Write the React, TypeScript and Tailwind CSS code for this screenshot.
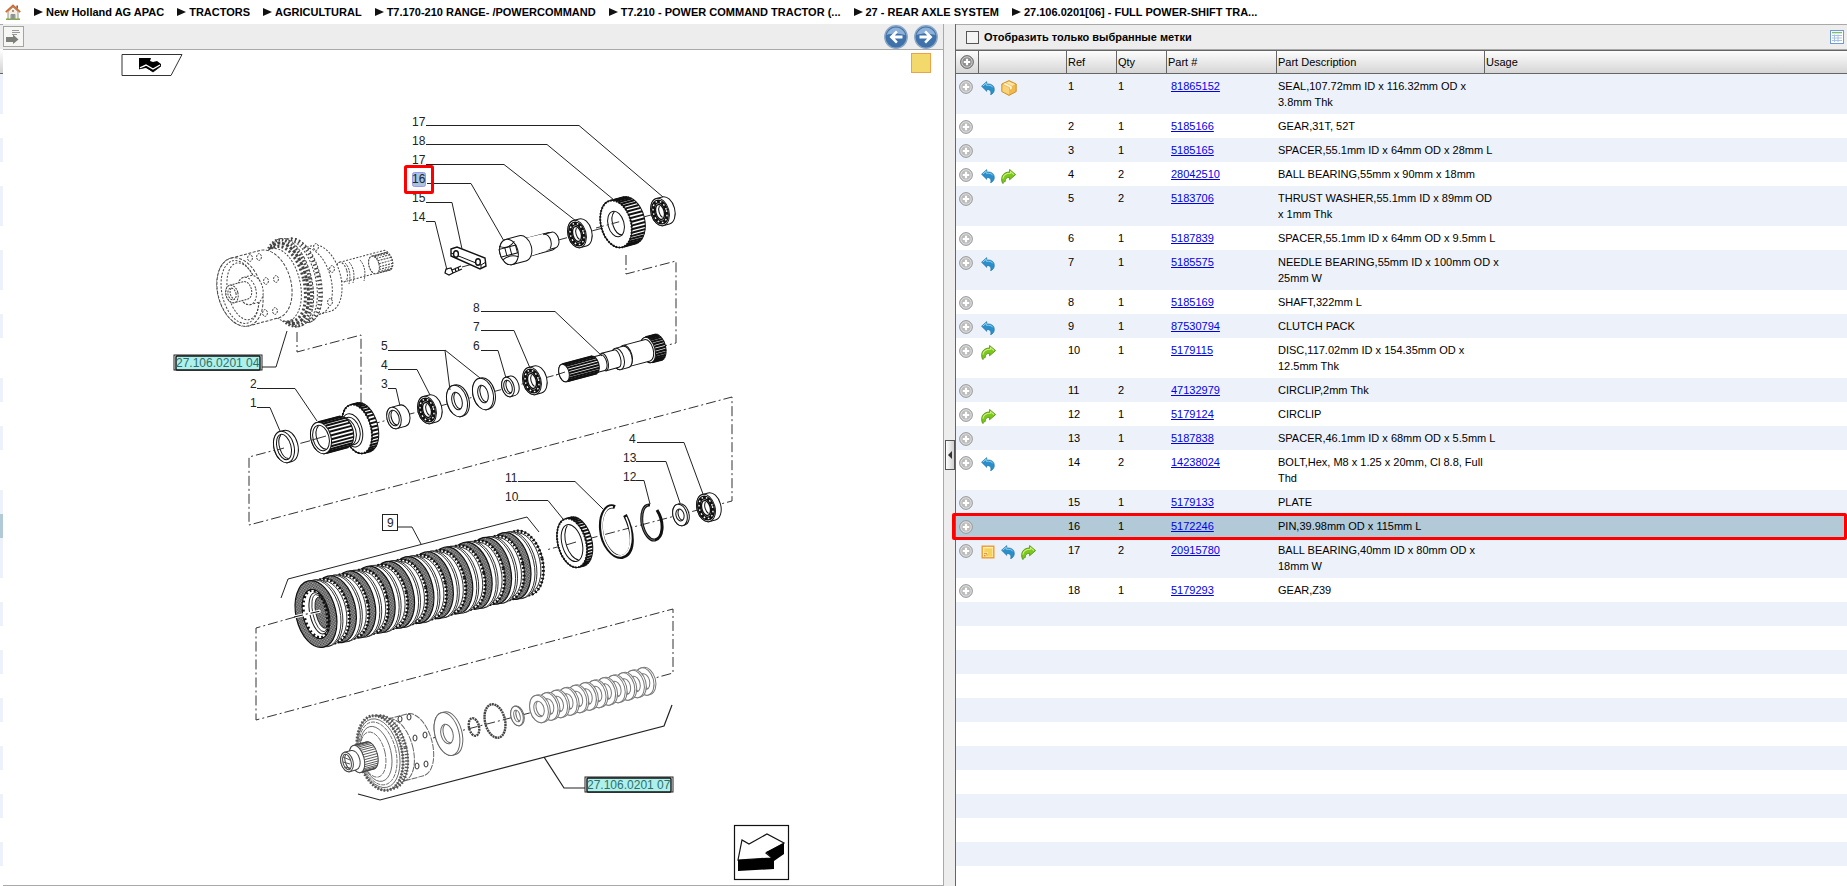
import { Fragment, useState } from 'react';
import type { ReactNode } from 'react';

type IconName = 'note' | 'blue' | 'green' | 'box';

interface Part {
  ref: number;
  qty: number;
  num: string;
  desc: string[];
  icons?: IconName[];
}

const CRUMBS = [
  'New Holland AG APAC',
  'TRACTORS',
  'AGRICULTURAL',
  'T7.170-210 RANGE- /POWERCOMMAND',
  'T7.210 - POWER COMMAND TRACTOR (...',
  '27 - REAR AXLE SYSTEM',
  '27.106.0201[06] - FULL POWER-SHIFT TRA...',
];

const PARTS: Part[] = [
  { ref: 1, qty: 1, num: '81865152', desc: ['SEAL,107.72mm ID x 116.32mm OD x', '3.8mm Thk'], icons: ['blue', 'box'] },
  { ref: 2, qty: 1, num: '5185166', desc: ['GEAR,31T, 52T'] },
  { ref: 3, qty: 1, num: '5185165', desc: ['SPACER,55.1mm ID x 64mm OD x 28mm L'] },
  { ref: 4, qty: 2, num: '28042510', desc: ['BALL BEARING,55mm x 90mm x 18mm'], icons: ['blue', 'green'] },
  { ref: 5, qty: 2, num: '5183706', desc: ['THRUST WASHER,55.1mm ID x 89mm OD', 'x 1mm Thk'] },
  { ref: 6, qty: 1, num: '5187839', desc: ['SPACER,55.1mm ID x 64mm OD x 9.5mm L'] },
  { ref: 7, qty: 1, num: '5185575', desc: ['NEEDLE BEARING,55mm ID x 100mm OD x', '25mm W'], icons: ['blue'] },
  { ref: 8, qty: 1, num: '5185169', desc: ['SHAFT,322mm L'] },
  { ref: 9, qty: 1, num: '87530794', desc: ['CLUTCH PACK'], icons: ['blue'] },
  { ref: 10, qty: 1, num: '5179115', desc: ['DISC,117.02mm ID x 154.35mm OD x', '12.5mm Thk'], icons: ['green'] },
  { ref: 11, qty: 2, num: '47132979', desc: ['CIRCLIP,2mm Thk'] },
  { ref: 12, qty: 1, num: '5179124', desc: ['CIRCLIP'], icons: ['green'] },
  { ref: 13, qty: 1, num: '5187838', desc: ['SPACER,46.1mm ID x 68mm OD x 5.5mm L'] },
  { ref: 14, qty: 2, num: '14238024', desc: ['BOLT,Hex, M8 x 1.25 x 20mm, Cl 8.8, Full', 'Thd'], icons: ['blue'] },
  { ref: 15, qty: 1, num: '5179133', desc: ['PLATE'] },
  { ref: 16, qty: 1, num: '5172246', desc: ['PIN,39.98mm OD x 115mm L'] },
  { ref: 17, qty: 2, num: '20915780', desc: ['BALL BEARING,40mm ID x 80mm OD x', '18mm W'], icons: ['note', 'blue', 'green'] },
  { ref: 18, qty: 1, num: '5179293', desc: ['GEAR,Z39'] },
];

const BLANK_ROWS = Array.from({ length: 12 }, (_, i) => i + PARTS.length);

function rowColor(index: number, selected: boolean) {
  if (selected) return 'bg-[#b2c9d8]';
  return index % 2 === 0 ? 'bg-[#edf2fa]' : 'bg-white';
}

/* ---------- icons ---------- */

function PlusIcon({ dark = false }: { dark?: boolean }) {
  return (
    <svg className="block size-[14px]" viewBox="0 0 14 14">
      <circle cx="7" cy="7" r="6.4" fill={dark ? '#8e8e8e' : '#bcbcbc'} stroke={dark ? '#6e6e6e' : '#9c9c9c'} />
      <circle cx="7" cy="7" r="5.2" fill="none" stroke={dark ? '#ddd' : '#e6e6e6'} strokeWidth="0.8" />
      <path d="M7 3.8V10.2M3.8 7H10.2" stroke="#fff" strokeWidth="2.2" />
    </svg>
  );
}

function PartIcon({ name }: { name: IconName }) {
  if (name === 'blue') {
    return (
      <svg className="h-[14px] w-[14px]" viewBox="0 0 14 14">
        <path d="M0.5 5.2L5.8 0.6V3C11 2.6 13.6 5 13.3 9C13.1 11 12 12.8 9.6 13.8C10.4 10.8 9.8 8.6 5.8 8.4V10.4Z" fill="#2b8fc9" stroke="#1c6fa6" strokeWidth="0.6" />
        <path d="M1.8 5.1L5.2 2.2V4.2C8.5 4 10.8 4.6 11.8 6.4" fill="none" stroke="#8fd0f2" strokeWidth="1" />
      </svg>
    );
  }
  if (name === 'green') {
    return (
      <svg className="h-[15px] w-[15px]" viewBox="0 0 15 15">
        <path d="M14.6 5.6L8.6 0.5V3C3 3.1 0.4 6.4 0.7 11C0.8 12.6 1.2 13.8 2 14.6C2 13.6 2.6 12.8 4.2 12.6C4.2 9.8 5.2 8.4 8.6 8.3V10.8Z" fill="#7cc91d" stroke="#4b8a0c" strokeWidth="0.8" />
        <path d="M13 5.6L9.5 2.6V4.3C5 4.3 2.4 6 1.8 9.6" fill="none" stroke="#cdf07a" strokeWidth="1.1" />
      </svg>
    );
  }
  if (name === 'box') {
    return (
      <svg className="h-4 w-4" viewBox="0 0 16 16">
        <path d="M8 0.6L15.2 4V11.6L8 15.4L0.8 11.6V4Z" fill="#f3b94a" stroke="#c98a1b" strokeWidth="0.9" />
        <path d="M8 1.4L14.2 4.3L8 7.6L1.8 4.3Z" fill="#fde6a4" />
        <path d="M8 7.8V14.6L1.6 11.2V4.8Z" fill="#f9d27c" />
        <path d="M4.6 3L11.2 6.2V9L8.6 10.2V7.4L2 4.4" fill="#fff6d8" stroke="#dfa23a" strokeWidth="0.5" />
      </svg>
    );
  }
  return (
    <svg className="h-[14px] w-[14px]" viewBox="0 0 14 14">
      <rect x="1.2" y="1.2" width="11.6" height="11.6" fill="#fff1c0" stroke="#f09a2c" strokeWidth="1.4" />
      <path d="M3.2 3.2H11.4V11.4H7V7.2H3.2Z" fill="#f4d25c" />
      <path d="M3 8.4H6V11.4" fill="none" stroke="#d9952a" strokeWidth="1" />
      <path d="M3 9.8H4.6V11.4H3Z" fill="#d9952a" />
    </svg>
  );
}

function HomeIcon() {
  return (
    <svg className="size-4" viewBox="0 0 16 16">
      <path d="M1 15.2H15" stroke="#7cb82f" strokeWidth="1.6" />
      <path d="M3 7.5V15H6V10.5H10V15H13V7.5L8 3Z" fill="#f4efe2" stroke="#8a8a86" strokeWidth="0.9" />
      <path d="M6.2 15V10.2H9.8V15Z" fill="#8d9196" />
      <path d="M11.3 1.5H13V5L11.3 3.6Z" fill="#9b5b3a" />
      <path d="M0.8 8.2L8 1.4L15.2 8.2" fill="none" stroke="#d0682a" strokeWidth="1.8" />
      <circle cx="8" cy="7" r="1" fill="#9a6f52" />
    </svg>
  );
}

function NavCircle({ flip = false }: { flip?: boolean }) {
  return (
    <svg className="block size-6" viewBox="0 0 24 24">
      <circle cx="12" cy="12" r="11.2" fill="#3f72ab" stroke="#8ba6c4" strokeWidth="1.4" />
      <path d="M2.5 10A9.8 9.8 0 0 1 21.5 10C15 8 8 8 2.5 10Z" fill="#8db1d8" />
      <path
        d={flip ? 'M12 5.5L18.5 12L12 18.5L10.2 16.7L13.2 13.6H5.5V10.4H13.2L10.2 7.3Z' : 'M12 5.5L5.5 12L12 18.5L13.8 16.7L10.8 13.6H18.5V10.4H10.8L13.8 7.3Z'}
        fill="#fff"
      />
    </svg>
  );
}

function ExportIcon() {
  return (
    <svg className="block size-[19px]" viewBox="0 0 19 19">
      <path d="M8 3.5H15M8 5.5H16M8 7.5H13" stroke="#9a9a9a" strokeWidth="1" />
      <path d="M2 10H9V7.5L14.5 12.5L9 17V15H2Z" fill="#7c7f7a" />
    </svg>
  );
}

function GridIcon() {
  return (
    <svg className="block size-[14px]" viewBox="0 0 14 14">
      <rect x="0.5" y="0.5" width="13" height="13" fill="#fff" stroke="#6f9ad3" />
      <path d="M2 2.6H12" stroke="#7fbf6c" strokeWidth="1.4" />
      <path d="M2 5.5H12M2 8H12M2 10.5H12M4.5 4.5V12M8 4.5V12" stroke="#a7c2e6" />
    </svg>
  );
}

/* ---------- exploded view ---------- */

const AXIS_TILT = -15;

function range(n: number) {
  return Array.from({ length: n }, (_, i) => i);
}

interface CylinderProps {
  x: number;
  y: number;
  rx: number;
  ry: number;
  w: number;
  hx?: number;
  hy?: number;
  ribs?: number;
  ribWidth?: number;
  depth?: number;
  dash?: string;
  stroke?: string;
  children?: ReactNode;
}

// A turned part seen from its left face, lying along the tilted axis
function Cylinder({ x, y, rx, ry, w, hx = 0, hy = 0, ribs = 0, ribWidth = 1, depth = 2, dash, stroke = '#111', children }: CylinderProps) {
  return (
    <g transform={`translate(${x} ${y}) rotate(${AXIS_TILT})`} fill="#fff" stroke={stroke} strokeDasharray={dash}>
      <path d={`M0 ${-ry}H${w}A${rx} ${ry} 0 0 1 ${w} ${ry}H0A${rx} ${ry} 0 0 1 0 ${-ry}Z`} />
      {range(ribs).map((i) => {
        const a = -Math.PI / 2 + (Math.PI * (i + 0.5)) / ribs;
        const px = Math.cos(a) * rx;
        const py = Math.sin(a) * ry;
        return <path key={i} d={`M${px.toFixed(1)} ${py.toFixed(1)}h${w}`} strokeWidth={ribWidth} />;
      })}
      <ellipse rx={rx} ry={ry} />
      {hx > 0 && (
        <>
          <ellipse rx={hx} ry={hy} />
          <path d={`M${-hx * 0.3} ${-hy * 0.95}A${hx} ${hy} 0 0 0 ${-hx * 0.1} ${hy * 0.95}`} transform={`translate(${depth} 0)`} fill="none" />
        </>
      )}
      {children}
    </g>
  );
}

function Bearing({ x, y }: { x: number; y: number }) {
  return (
    <Cylinder x={x} y={y} rx={9} ry={14} w={6}>
      <ellipse rx="6.6" ry="10.8" fill="none" stroke="#111" strokeWidth="4" />
      <ellipse rx="6.6" ry="10.8" fill="none" stroke="#fff" strokeWidth="1.4" strokeDasharray="1.6 2.8" />
      <ellipse rx="4.2" ry="7.6" strokeWidth="1.4" />
      <path d="M1 -6A4 7 0 0 0 1 6" fill="none" />
    </Cylinder>
  );
}

function Teeth({ rx, ry, width = 2.5, dash = '1.6 1.6' }: { rx: number; ry: number; width?: number; dash?: string }) {
  return <ellipse rx={rx} ry={ry} fill="none" strokeWidth={width} strokeDasharray={dash} />;
}

function ClutchPack() {
  return (
    <g>
      {range(11).reverse().map((i) => {
        const x = 316 + i * 19.4;
        const y = 614 - i * 4.8;
        return (
          <g key={i} stroke="#111">
            <g transform={`translate(${x + 13} ${y - 3}) rotate(-13)`}>
              <ellipse rx="20" ry="33" fill="#fff" strokeWidth="0.8" />
              <Teeth rx={19.5} ry={32.5} width={3} dash="1.8 2" />
              <ellipse cx="-1" rx="18" ry="31" fill="#fff" strokeWidth="0.8" />
            </g>
            <g transform={`translate(${x + 6} ${y - 1}) rotate(-13)`}>
              <ellipse rx="20" ry="34" fill="#fff" strokeWidth="0.8" />
              <ellipse cx="-2" rx="20" ry="34" fill="#fff" strokeWidth="0.8" />
            </g>
            <g transform={`translate(${x} ${y}) rotate(-13)`}>
              <ellipse rx="20" ry="34" fill="url(#friction)" strokeWidth="1.2" />
            </g>
          </g>
        );
      })}
      <g transform="translate(316 614) rotate(-13)" stroke="#111">
        <ellipse rx="13" ry="25" fill="#fff" />
        <Teeth rx={12} ry={24} width={3} dash="2 2.5" />
        <ellipse cx="3" rx="9" ry="21" fill="#fff" strokeWidth="1" />
        <ellipse cx="4" rx="7" ry="19" fill="#fff" strokeWidth="0.8" />
        <ellipse cx="6" rx="6" ry="16" fill="url(#friction)" strokeWidth="0.8" />
        <path d="M8 -18C12 -9 12 8 7 18" fill="none" strokeWidth="3" strokeDasharray="2 2" />
        <path d="M-21 -2H5" stroke="#fff" strokeWidth="3" />
        <path d="M-22 -2H6" strokeDasharray="9 3 2 3" />
      </g>
    </g>
  );
}

function GhostClutch() {
  return (
    <g stroke="#444">
      <Cylinder x={342} y={272} rx={5} ry={10} w={46} dash="2 1.5" stroke="#444" />
      <Cylinder x={374} y={265} rx={5} ry={9} w={14} ribs={9} dash="2 1" stroke="#444" />
      <path d="M345 263Q352 270 349 284M349 262Q356 270 353 283M360 260Q367 268 364 281" fill="none" strokeDasharray="2 1" />
      <Cylinder x={312} y={281} rx={19} ry={34} w={10} dash="2 1.5" stroke="#444" />
      <g transform="translate(288 283) rotate(-13)">
        <ellipse cx="12" rx="21" ry="43" fill="#fff" strokeWidth="1" strokeDasharray="2 2" />
        <ellipse cx="11" rx="20" ry="42" fill="none" strokeWidth="4" strokeDasharray="1.4 2.6" />
        <ellipse cx="7" rx="21" ry="42" fill="#fff" strokeDasharray="2 1.5" />
        <ellipse cx="2" rx="22" ry="45" fill="#fff" strokeDasharray="3 1.5" />
        <Teeth rx={22} ry={44} width={3} dash="1.6 1.8" />
        <ellipse cx="-1" rx="20" ry="41" fill="none" strokeWidth="3" strokeDasharray="3 1.6" />
        <ellipse cx="-3" rx="19" ry="38" fill="none" strokeWidth="3" strokeDasharray="2 2.2" />
        <ellipse cx="-8" rx="20" ry="37" fill="#fff" strokeDasharray="2 1.5" />
      </g>
      <Cylinder x={240} y={292} rx={22} ry={35} w={30} dash="3 1.5" stroke="#444" />
      <g transform="translate(240 292) rotate(-13)" fill="none" strokeDasharray="2 1.5">
        <ellipse rx="18" ry="32" />
        <ellipse cx="3" rx="15" ry="29" />
      </g>
      <Cylinder x={247} y={291} rx={9} ry={14} w={7} dash="2 1.5" stroke="#444" />
      <Cylinder x={232} y={294} rx={6} ry={9} w={14} hx={4} hy={6} dash="2 1" stroke="#444" />
      <g fill="#fff" strokeDasharray="2 1">
        {[[266, 281], [276, 279], [265, 313], [275, 311], [250, 258], [259, 257], [332, 269], [330, 302], [316, 247]].map(([cx, cy]) => (
          <ellipse key={`${cx}-${cy}`} cx={cx} cy={cy} rx="2.4" ry="3.4" />
        ))}
      </g>
    </g>
  );
}

function GhostDrum() {
  return (
    <g stroke="#555">
      <Cylinder x={396} y={750} rx={17} ry={32} w={20} dash="6 1" stroke="#666" />
      <g transform="translate(386 752) rotate(-13)">
        <ellipse rx="21" ry="37" fill="#fff" strokeWidth="0.8" />
        <Teeth rx={20} ry={36.5} width={4} dash="1.4 1.8" />
      </g>
      <g transform="translate(380 753) rotate(-13)">
        <ellipse rx="22" ry="38" fill="#fff" strokeWidth="0.8" />
        <Teeth rx={22} ry={38} width={3} dash="1.6 1.6" />
        <ellipse cx="-1" rx="20" ry="35" fill="#fff" strokeWidth="0.8" />
        <ellipse cx="-2" rx="18" ry="32" fill="none" strokeDasharray="4 1" strokeWidth="0.8" />
        <ellipse cx="-4" rx="15" ry="28" fill="none" strokeWidth="0.8" />
        <ellipse cx="-7" rx="12" ry="23" fill="none" strokeDasharray="5 1" strokeWidth="0.8" />
      </g>
      <Cylinder x={357} y={759} rx={7} ry={14} w={14} ribs={17} ribWidth={0.8} stroke="#444" />
      <Cylinder x={347} y={762} rx={6} ry={10} w={7} hx={4} hy={8} stroke="#444" />
      <path d="M343 757l7 3M343 762l7 2M344 767l6 1" />
      <g fill="#fff" stroke="#333">
        {[[400, 719], [409, 717], [415, 738], [425, 735], [417, 766], [426, 764]].map(([cx, cy]) => (
          <ellipse key={`${cx}-${cy}`} cx={cx} cy={cy} rx="2" ry="3" />
        ))}
      </g>
    </g>
  );
}

const CALLOUTS: [string, number, number, string][] = [
  ['17', 412, 126, 'M426 125.5H579L663 197'],
  ['18', 412, 145, 'M426 144.5H547L614 200'],
  ['17', 412, 164, 'M426 164.5H504L576 221'],
  ['16', 412, 183, 'M427 183.5H471L504 241'],
  ['15', 412, 202, 'M426 202.5H452L462 249'],
  ['14', 412, 221, 'M426 221.5H435L447 270'],
  ['8', 473, 312, 'M481 311.5H555L602 356'],
  ['7', 473, 331, 'M481 330.5H514L530 368'],
  ['6', 473, 350, 'M481 350.5H498L506 378'],
  ['5', 381, 350, 'M388 350.5H445L450 390M445 350L480 378'],
  ['4', 381, 369, 'M388 369.5H417L430 395'],
  ['3', 381, 388, 'M388 388.5H396L400 406'],
  ['2', 250, 388, 'M257 388.5H295L317 421'],
  ['1', 250, 407, 'M257 407.5H270L280 431'],
  ['11', 505, 482, 'M518 481.5H575L603 509'],
  ['10', 505, 501, 'M518 500.5H548L563 519'],
  ['4', 629, 443, 'M637 442.5H684L703 494'],
  ['13', 623, 462, 'M636 461.5H666L680 503'],
  ['12', 623, 481, 'M636 480.5H644L650 504'],
];

function ReferenceTag({ x, y, label }: { x: number; y: number; label: string }) {
  return (
    <g>
      <rect x={x} y={y} width="88" height="15" fill="#fff" stroke="#222" />
      <rect x={x + 2} y={y + 1} width="84" height="14" rx="1" fill="#aef0ea" stroke="#111" strokeWidth="1.4" />
      <text x={x + 2} y={y + 12} fill="#2f6f6b">{label}</text>
    </g>
  );
}

function ExplodedView() {
  return (
    <svg
      className="block h-full w-full font-['Liberation_Sans',Arial,sans-serif] text-[12px]"
      viewBox="3 50 940 835"
      preserveAspectRatio="xMinYMin meet"
      role="img"
      aria-label="27.106.0201[06]"
    >
      <defs>
        <pattern id="friction" width="3" height="3" patternUnits="userSpaceOnUse">
          <rect width="3" height="3" fill="#a8a8a8" />
          <path d="M0 0H1.4V1.4H0ZM1.5 1.5H2.9V2.9H1.5Z" fill="#3a3a3a" />
        </pattern>
      </defs>

      <path d="M122 54.5H182L171 75.5H122Z" fill="#fff" stroke="#333" />
      <path d="M139 58H151L150 61L153 62L157 61L161 64V66L153 72L146 68L139 69Z" fill="#000" />
      <path d="M140 68L146 65L153 69L160 65" fill="none" stroke="#fff" strokeWidth="1.4" />
      <path d="M139 69L146 67L153 72L161 66" fill="none" stroke="#000" strokeWidth="0.8" />

      {/* assembly axes */}
      <g fill="none" stroke="#333" strokeDasharray="10 3 2 3">
        <path d="M297 332V352L361 335V403" />
        <path d="M626 255V274L676 261V343L664 346" />
        <path d="M283 448L249 457V525L732 397V501L546 550" />
        <path d="M295 617L256 628V720L673 609V673L655 678" />
        <path d="M283 448L567 372" />
        <path d="M540 245L662 212" />
        <path d="M433 738L545 709" />
        <path d="M462 267L480 262" />
      </g>

      <GhostClutch />
      <GhostDrum />

      {/* row 14 - 18 */}
      <path d="M451 249L457 247L485 258L486 266L480 269L451 256Z" fill="#fff" stroke="#111" strokeWidth="1.4" />
      <path d="M451 253L481 265L486 262M481 265V268" fill="none" stroke="#111" />
      <ellipse cx="456" cy="254" rx="2.4" ry="3.2" fill="#fff" stroke="#111" strokeWidth="1.4" />
      <ellipse cx="478" cy="262" rx="2.4" ry="3.2" fill="#fff" stroke="#111" strokeWidth="1.4" />
      <path d="M446 269L451 268L453 273L449 275L445 273ZM452 270L461 266M453 273L462 269M455 268l1 4M458 267l1 4" fill="#fff" stroke="#111" strokeWidth="1.2" />
      <Cylinder x={529} y={247} rx={6} ry={9} w={22} />
      <Cylinder x={546} y={242} rx={5} ry={8} w={8} />
      <path d="M526 238L543 234L550 249L531 256Z" fill="#fff" />
      <Cylinder x={509} y={252} rx={9} ry={13} w={14}>
        <path d="M-9 -5L8 -5V3L-9 3Z" />
        <path d="M-3 -5V3M2 -5V3M-8 -8Q0 -2 8 -9M-8 6Q0 2 8 7" fill="none" />
      </Cylinder>
      <Bearing x={577} y={234} />
      <Cylinder x={616} y={224} rx={15} ry={24} w={14} ribs={20} ribWidth={2} hx={8} hy={13} depth={4}>
        <Teeth rx={15} ry={24} width={2} dash="1.5 1.5" />
      </Cylinder>
      <path d="M596 228L622 221" stroke="#333" strokeDasharray="8 3 2 3" />
      <Bearing x={660} y={212} />

      {/* row 1 - 8 */}
      <Cylinder x={284} y={447} rx={10} ry={16} w={4} hx={7} hy={13} depth={2} />
      <path d="M277 450L284 448" stroke="#333" />
      <Cylinder x={357} y={429} rx={14} ry={25} w={7} ribs={20} ribWidth={2}>
        <Teeth rx={14} ry={25} width={2} />
        <ellipse cx="-5" rx="10" ry="17" />
      </Cylinder>
      <Cylinder x={347} y={432} rx={9} ry={14} w={4} />
      <Cylinder x={321} y={438} rx={10} ry={16} w={23} ribs={13} ribWidth={2} hx={8} hy={13} depth={3} />
      <path d="M312 440L326 436" stroke="#333" />
      <Cylinder x={394} y={418} rx={7} ry={11} w={9} hx={5} hy={8} depth={2} />
      <Bearing x={427} y={410} />
      <Cylinder x={457} y={401} rx={10} ry={16} w={2} hx={5} hy={9} />
      <Cylinder x={483} y={394} rx={10} ry={16} w={2} hx={5} hy={9} />
      <Cylinder x={508} y={387} rx={6} ry={10} w={5} hx={4} hy={7} />
      <Bearing x={532} y={381} />
      <Cylinder x={648} y={350} rx={7} ry={13} w={11} ribs={14} ribWidth={2.2} />
      <Cylinder x={626} y={356} rx={6} ry={11} w={22} />
      <Cylinder x={618} y={359} rx={6} ry={11} w={8} />
      <Cylinder x={604} y={362} rx={4} ry={9} w={13} />
      <Cylinder x={594} y={365} rx={4} ry={8} w={9} />
      <Cylinder x={564} y={373} rx={5} ry={9} w={31} ribs={10} ribWidth={2} />
      <path d="M556 375L565 372" stroke="#333" />

      {/* row 10 - 13 */}
      <Cylinder x={572} y={543} rx={14} ry={25} w={6} ribs={22} ribWidth={2} hx={10} hy={19} depth={3}>
        <Teeth rx={14} ry={25} width={2} dash="1.5 1.5" />
      </Cylinder>
      <path d="M566 545L576 542" stroke="#333" />
      <g fill="none">
        <path d="M615 507C607 504 600 513 601 529C602 545 613 558 622 557C634 554 635 535 625 515" stroke="#111" strokeWidth="4" />
        <path d="M613 507C607 506 601 514 602 529C603 545 613 557 621 556C632 554 634 535 626 517" stroke="#fff" strokeWidth="1.6" />
        <path d="M650 505C643 504 641 514 642 523C644 534 650 541 655 540C663 538 665 523 657 510" stroke="#111" strokeWidth="3" />
        <path d="M648 505C643 506 641 514 642 523C644 534 650 541 655 540" stroke="#888" strokeWidth="0.8" />
      </g>
      <Cylinder x={680} y={515} rx={7} ry={11} w={2} hx={4} hy={6} />
      <Bearing x={706} y={508} />

      <ClutchPack />
      <path d="M281 598L288 579L527 517L539 532M398 527H412L421 544" fill="none" stroke="#222" />
      <rect x="382.5" y="514.5" width="15" height="16" fill="#fff" stroke="#222" />
      <text x="387" y="527" fill="#222">9</text>

      {/* reference assembly 07 */}
      <Cylinder x={447} y={734} rx={12} ry={22} w={3} hx={6} hy={10} stroke="#666" />
      <g fill="none" stroke="#444">
        <ellipse cx="474" cy="727" rx="5" ry="9" transform="rotate(-13 474 727)" strokeWidth="2.4" strokeDasharray="2 0.8" />
        <ellipse cx="495" cy="721" rx="10" ry="17" transform="rotate(-13 495 721)" strokeWidth="2.4" strokeDasharray="2 0.6" />
      </g>
      <Cylinder x={517} y={716} rx={6} ry={10} w={1} hx={3} hy={6} stroke="#666" />
      {range(12).reverse().map((i) => (
        <Cylinder key={i} x={539 + i * 9.6} y={709 - i * 2.5} rx={9} ry={14} w={2} hx={5} hy={8} stroke="#777" />
      ))}
      <path d="M358 794L380 800L664 726L672 705M544 757L564 788H586" fill="none" stroke="#222" strokeWidth="1.2" />

      <path d="M261 367H276L287 331" fill="none" stroke="#222" />
      <ReferenceTag x={174} y={355} label="27.106.0201 04" />
      <ReferenceTag x={585} y={777} label="27.106.0201 07" />

      {/* selected callout */}
      <rect x="412.5" y="172.5" width="13" height="14" rx="2" fill="#a9c2de" stroke="#9a96f0" />
      {CALLOUTS.map(([label, x, y, d]) => (
        <Fragment key={`${label}-${y}-${x}`}>
          <path d={d} fill="none" stroke="#222" />
          <text x={x} y={y} fill="#222">{label}</text>
        </Fragment>
      ))}
      <rect x="405.5" y="166.5" width="27" height="26" rx="1" fill="none" stroke="#f00" strokeWidth="3" />

      <rect x="734.5" y="825.5" width="54" height="54" fill="#fff" stroke="#111" strokeWidth="1.2" />
      <path d="M738 860L742 840L749 844L767 834L784 843L766 853L772 858Z" fill="#fff" stroke="#111" strokeWidth="1.2" />
      <path d="M738 860L772 858L766 852L784 843V854L774 861V869L738 871Z" fill="#000" />
    </svg>
  );
}

/* ---------- page ---------- */

export default function App() {
  const [selected, setSelected] = useState(16);
  const [onlySelected, setOnlySelected] = useState(false);

  return (
    <div className="flex h-screen flex-col overflow-hidden bg-white font-['Liberation_Sans',Arial,sans-serif] text-[11px] leading-4 text-black">
      <nav className="flex h-6 shrink-0 items-center gap-[13px] whitespace-nowrap pl-[5px] font-bold">
        <a href="#" aria-label="Home">
          <HomeIcon />
        </a>
        {CRUMBS.map((crumb) => (
          <span key={crumb} className="flex items-center gap-[3px]">
            <svg className="h-2 w-[9px]" viewBox="0 0 9 8">
              <path d="M0 0L9 4L0 8Z" fill="#111" />
            </svg>
            <a href="#">{crumb}</a>
          </span>
        ))}
      </nav>

      <div className="grid min-h-0 flex-1 grid-cols-[3px_941fr_11px_892fr] bg-[#ededed]">
        <div className="overflow-hidden border-t border-[#a9a9a9]">
          <div className="h-6" />
          <div className="h-[25px] border-b border-[#666] bg-linear-to-b from-white to-[#d4d4d4]" />
          {PARTS.map((part, i) => (
            <div
              key={part.ref}
              className={`${part.desc.length > 1 ? 'h-10' : 'h-6'} ${rowColor(i, part.ref === selected)}`}
            />
          ))}
          {BLANK_ROWS.map((i) => (
            <div key={i} className={`h-6 ${rowColor(i, false)}`} />
          ))}
        </div>

        <section className="flex min-h-0 min-w-0 flex-col border-b border-r border-[#a9a9a9]">
          <div className="flex h-[26px] shrink-0 items-center justify-between border-b border-[#a9a9a9] pr-[5px]">
            <button className="border border-[#a3a5a0] bg-[#f6f6f4]" aria-label="Export">
              <ExportIcon />
            </button>
            <div className="flex gap-[6px]">
              <button aria-label="Back">
                <NavCircle />
              </button>
              <button aria-label="Forward">
                <NavCircle flip />
              </button>
            </div>
          </div>
          <div className="relative min-h-0 flex-1 bg-white">
            <ExplodedView />
            <button
              aria-label="Note"
              className="absolute right-3 top-[3px] h-5 w-5 border border-[#eda24a] bg-[#f3d96c]"
            />
          </div>
        </section>

        <div className="flex items-center justify-center">
          <button
            aria-label="Collapse"
            className="flex h-[30px] w-[10px] items-center justify-center border border-[#555] bg-linear-to-r from-white to-[#d0d0d0]"
          >
            <svg className="h-2 w-1" viewBox="0 0 4 8">
              <path d="M4 0V8L0 4Z" fill="#333" />
            </svg>
          </button>
        </div>

        <section className="flex min-h-0 min-w-0 flex-col border-l border-[#666]">
          <div className="flex h-[26px] shrink-0 items-center justify-between border-y border-[#a9a9a9] pl-[10px] pr-[3px]">
            <label className="flex items-center gap-[5px] font-bold">
              <input
                type="checkbox"
                checked={onlySelected}
                onChange={(e) => setOnlySelected(e.target.checked)}
                className="size-[13px] appearance-none border border-[#555] bg-[#f4f4f4] checked:bg-[#555]"
              />
              Отобразить только выбранные метки
            </label>
            <button aria-label="Columns">
              <GridIcon />
            </button>
          </div>

          <div className="min-h-0 flex-1 overflow-y-clip bg-white">
            <table className="w-full table-fixed border-separate border-spacing-0 text-left">
              <colgroup>
                <col className="w-[22px]" />
                <col className="w-[88px]" />
                <col className="w-[50px]" />
                <col className="w-[50px]" />
                <col className="w-[110px]" />
                <col className="w-[208px]" />
                <col />
              </colgroup>
              <thead>
                <tr className="h-6 bg-linear-to-b from-white to-[#d4d4d4] [&>th]:border-y [&>th]:border-[#666] [&>th]:p-0 [&>th]:font-normal">
                  <th>
                    <button className="block pl-1" aria-label="Add all">
                      <PlusIcon dark />
                    </button>
                  </th>
                  {['', 'Ref', 'Qty', 'Part #', 'Part Description', 'Usage'].map((title) => (
                    <th key={title} className="border-l">
                      <span className="pl-px">{title}</span>
                    </th>
                  ))}
                </tr>
              </thead>
              <tbody>
                {PARTS.map((part, i) => (
                  <tr
                    key={part.ref}
                    onClick={() => setSelected(part.ref)}
                    className={`align-top ${part.ref === selected ? 'relative z-10' : ''} ${rowColor(i, part.ref === selected)}`}
                  >
                    <td className="p-0 pl-[3px] pt-[6px]">
                      <button className="block" aria-label={`Add ${part.num}`}>
                        <PlusIcon />
                      </button>
                      {part.ref === selected && (
                        <span className="pointer-events-none absolute -bottom-[2px] -left-1 -top-px right-0 rounded-xs border-3 border-[#f00]" />
                      )}
                    </td>
                    <td className="p-0 pl-[3px] pt-[6px]">
                      <div className="flex h-4 items-center gap-[6px]">
                        {part.icons?.map((name) => <PartIcon key={name} name={name} />)}
                      </div>
                    </td>
                    <td className="px-[2px] py-1">{part.ref}</td>
                    <td className="px-[2px] py-1">{part.qty}</td>
                    <td className="px-[5px] py-1">
                      <a href="#" className="text-[#0000ee] underline">
                        {part.num}
                      </a>
                    </td>
                    <td className="whitespace-nowrap px-[2px] py-1">
                      {part.desc.map((line) => (
                        <div key={line}>{line}</div>
                      ))}
                    </td>
                    <td />
                  </tr>
                ))}
                {BLANK_ROWS.map((i) => (
                  <tr key={i} className={`h-6 ${rowColor(i, false)}`}>
                    <td colSpan={7} />
                  </tr>
                ))}
              </tbody>
            </table>
          </div>
        </section>
      </div>
    </div>
  );
}
